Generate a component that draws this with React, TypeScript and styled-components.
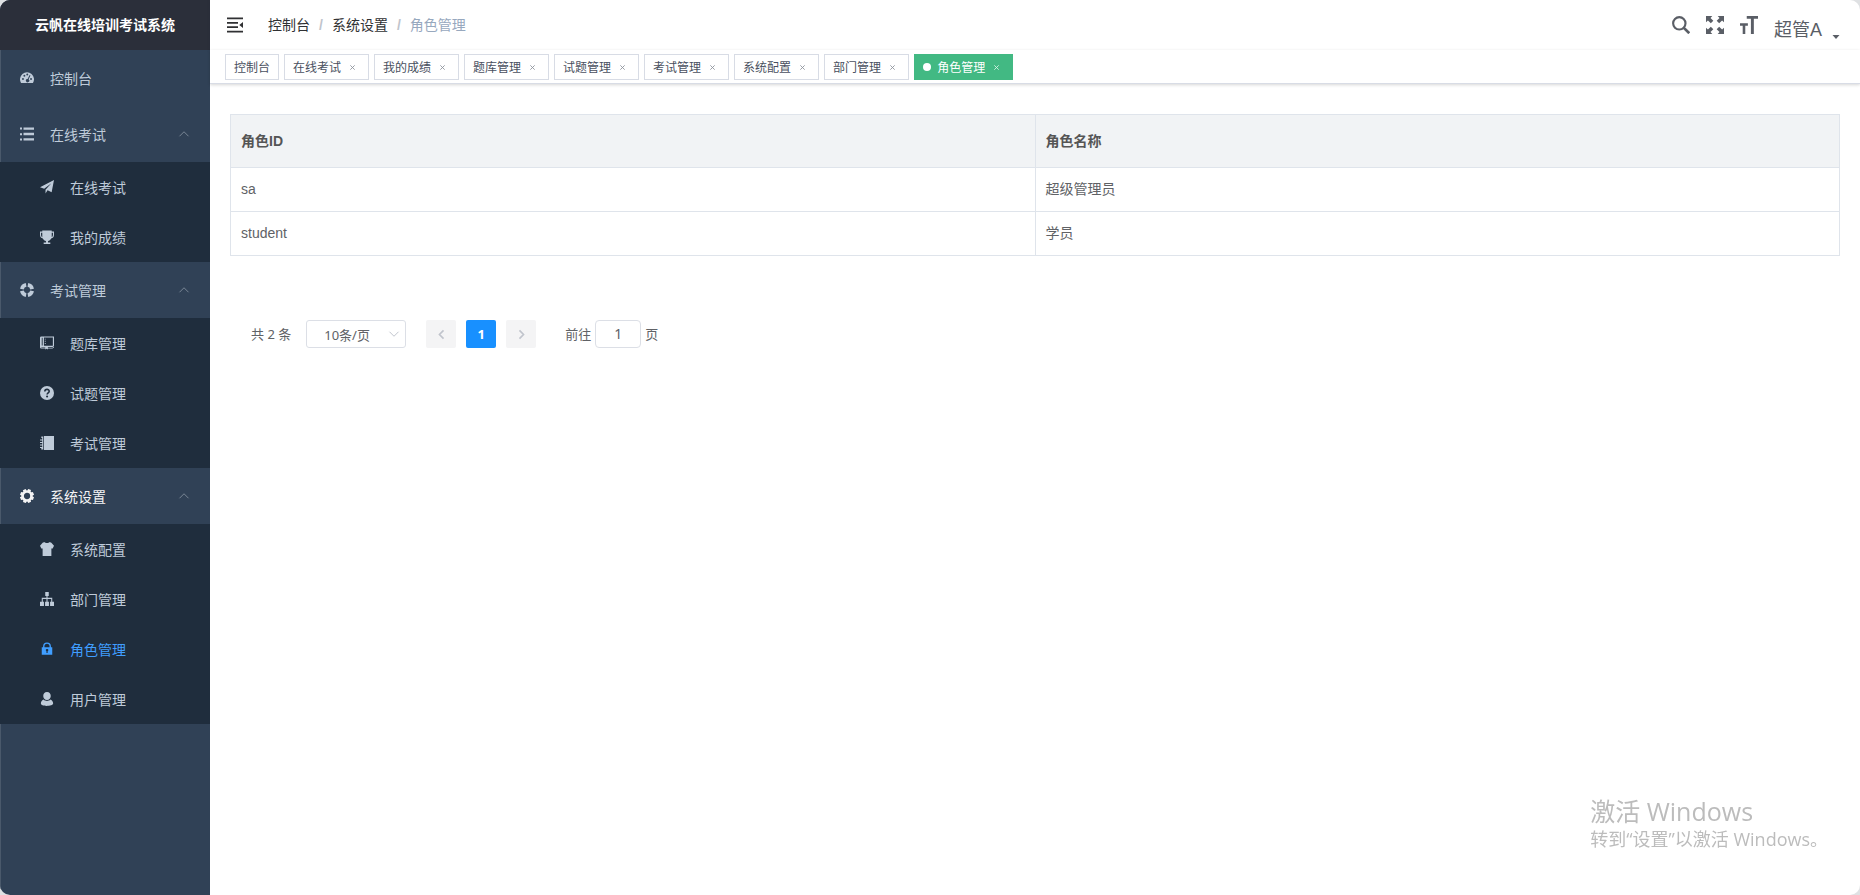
import React, { useState } from 'react';
import styled, { createGlobalStyle, css } from 'styled-components';

const GlobalStyle = createGlobalStyle`
  *, *::before, *::after { box-sizing: border-box; }
  body {
    margin: 0;
    background: #dfe1e3;
    color: #303133;
    font-family: "Liberation Sans", "Noto Sans CJK SC", sans-serif;
    font-size: 14px;
  }
  button, input, select { font: inherit; color: inherit; }
  a { color: inherit; text-decoration: none; }
`;

const Shell = styled.div`
  display: flex;
  min-height: 100vh;
  overflow: hidden;
  border-radius: 10px;
  background: #fff;
`;

const Sidebar = styled.aside`
  flex: 0 0 210px;
  background: #304156;
  box-shadow: inset 1px 0 0 #4a596b;
`;

const Brand = styled.h1`
  margin: 0;
  height: 50px;
  line-height: 50px;
  text-align: center;
  font-size: 14px;
  font-weight: 700;
  color: #fff;
  background: #2b2f3a;
`;

const MenuList = styled.ul`
  margin: 0;
  padding: 0;
  list-style: none;
`;

const itemLayout = css`
  display: flex;
  align-items: center;
  width: 100%;
  border: 0;
  background: none;
  cursor: pointer;
  text-align: left;
`;

const TopItem = styled.button<{ $current?: boolean }>`
  ${itemLayout}
  height: 56px;
  padding: 0 20px;
  gap: 16px;
  color: ${p => (p.$current ? '#f4f4f5' : '#bfcbd9')};
`;

const TopLink = styled.a`
  ${itemLayout}
  height: 56px;
  padding: 0 20px;
  gap: 16px;
  color: #bfcbd9;
`;

const SubLink = styled.a<{ $active?: boolean }>`
  ${itemLayout}
  height: 50px;
  padding: 0 20px 0 40px;
  gap: 16px;
  background: #1f2d3d;
  color: ${p => (p.$active ? '#409eff' : '#bfcbd9')};
`;

const Glyph = styled.svg<{ $size: number }>`
  flex: none;
  display: block;
  width: ${p => p.$size}px;
  height: ${p => p.$size}px;
  fill: currentColor;
`;

const Arrow = styled(Glyph)`
  margin-left: auto;
  color: #8793a1;
`;

const Main = styled.main`
  flex: 1;
  min-width: 0;
`;

const Navbar = styled.header`
  display: flex;
  align-items: center;
  justify-content: space-between;
  height: 50px;
  padding: 0 20px 0 17px;
  box-shadow: 0 1px 4px rgba(0, 21, 41, 0.08);
`;

const NavGroup = styled.div`
  display: flex;
  align-items: center;
`;

const IconButton = styled.button`
  display: flex;
  padding: 0;
  border: 0;
  background: none;
  color: inherit;
  cursor: pointer;
`;

const Crumbs = styled.nav`
  display: flex;
  gap: 9px;
  margin-left: 25px;
  line-height: 50px;
  span { color: #97a8be; }
  i { color: #c0c4cc; font-style: normal; font-weight: 700; }
`;

const Tools = styled(NavGroup)`
  gap: 16px;
  color: #5a5e66;
`;

const UserButton = styled(IconButton)`
  align-items: flex-end;
  gap: 10px;
  padding-top: 6px;
  font-size: 18px;
`;

const TagBar = styled.nav`
  display: flex;
  align-items: center;
  gap: 5px;
  height: 34px;
  padding: 0 15px;
  background: #fff;
  border-bottom: 1px solid #d8dce5;
  box-shadow: 0 1px 3px rgba(0, 0, 0, 0.16);
`;

const Tag = styled.div<{ $active?: boolean }>`
  display: flex;
  align-items: center;
  height: 26px;
  padding: 0 8px;
  border: 1px solid ${p => (p.$active ? '#42b983' : '#d8dce5')};
  background: ${p => (p.$active ? '#42b983' : '#fff')};
  color: ${p => (p.$active ? '#fff' : '#495060')};
  font-size: 12px;
`;

const Dot = styled.span`
  width: 8px;
  height: 8px;
  margin-right: 6px;
  border-radius: 50%;
  background: #fff;
`;

const TagClose = styled.button<{ $active?: boolean }>`
  display: flex;
  align-items: center;
  justify-content: center;
  width: 16px;
  height: 16px;
  margin-left: 3px;
  padding: 2px 0 0;
  border: 0;
  background: none;
  color: ${p => (p.$active ? '#d9f1e6' : '#8d929b')};
  cursor: pointer;
`;

const Content = styled.section`
  padding: 30px 20px;
`;

const Table = styled.table`
  width: 100%;
  table-layout: fixed;
  border-collapse: collapse;
  color: #606266;
  th, td {
    border: 1px solid #dfe4eb;
    padding: 0 10px;
    text-align: left;
    line-height: 23px;
  }
  th {
    height: 53px;
    background: #f1f3f5;
    color: #555;
  }
  td { height: 44px; }
`;

const Pagination = styled.div`
  display: flex;
  align-items: center;
  margin-top: 64px;
  padding-left: 21px;
  font-family: "Noto Sans", "Noto Sans CJK SC", sans-serif;
  font-size: 13px;
  line-height: 28px;
  color: #606266;
`;

const SelectBox = styled.div`
  position: relative;
  width: 100px;
  margin: 0 20px 0 15px;
`;

const PageSize = styled.select`
  display: block;
  width: 100%;
  height: 28px;
  padding: 0 32px 2px 17px;
  appearance: none;
  border: 1px solid #dcdfe6;
  border-radius: 3px;
  background: #fff;
  outline: none;
`;

const SelectArrow = styled(Glyph)`
  position: absolute;
  right: 6px;
  top: 8px;
  color: #c0c4cc;
  pointer-events: none;
`;

const Pager = styled.div`
  display: flex;
  gap: 10px;
`;

const PageButton = styled.button<{ $active?: boolean }>`
  display: flex;
  align-items: center;
  justify-content: center;
  width: 30px;
  height: 28px;
  padding: 0;
  border: 0;
  border-radius: 2px;
  background: ${p => (p.$active ? '#1890ff' : '#f4f4f5')};
  color: ${p => (p.$active ? '#fff' : '#c0c4cc')};
  font-weight: 700;
`;

const Jump = styled.label`
  display: flex;
  align-items: center;
  gap: 4px;
  margin-left: 29px;
`;

const JumpInput = styled.input`
  width: 46px;
  height: 28px;
  padding: 0 3px;
  border: 1px solid #dcdfe6;
  border-radius: 4px;
  text-align: center;
  font-size: 14px;
`;

const Watermark = styled.aside`
  position: fixed;
  right: 32px;
  bottom: 44px;
  color: #bcbcbc;
  font-family: "Open Sans", "Noto Sans CJK SC", sans-serif;
  font-weight: 400;
  pointer-events: none;
`;

const WatermarkTitle = styled.div`
  font-size: 25px;
  line-height: 32px;
`;

const WatermarkText = styled.div`
  font-size: 18px;
  line-height: 24px;
`;

const art: Record<string, React.ReactNode> = {
  dashboard: (
    <path fillRule="evenodd" d="M1.2 13.600A8 8 0 1 1 14.8 13.600H1.200ZM3.400 8a1.100 1.100 0 1 0 0 2.200 1.100 1.100 0 0 0 0-2.200Zm1.600-3.700a1.100 1.100 0 1 0 0 2.200 1.100 1.100 0 0 0 0-2.200Zm3.300-1.500a1.100 1.100 0 1 0 0 2.200 1.100 1.100 0 0 0 0-2.200Zm4.300 5.200a1.100 1.100 0 1 0 0 2.200 1.100 1.100 0 0 0 0-2.200ZM11 4.700 8.700 9.100a1.900 1.900 0 1 0 1.100.4L12 5.200Z" />
  ),
  list: <path d="M0 .5h2.300v2.300H0zM4 .5h12v2.700H4zM0 7h2.300v2.300H0zM4 6.700h12v2.700H4zM0 13h2.300v2.300H0zM4 12.800h12v2.700H4z" />,
  plane: <path d="M16 0 13.300 14 8.600 11.800 6.300 15.400V11L13 3.600 4.800 10 0 8.400Z" />,
  trophy: (
    <path fillRule="evenodd" d="M2.600.5h10.800v1.300H16v3.700c0 2.300-1.100 3.900-3.300 4.200-.8 1.600-2 2.500-3.500 2.800v1.800h2.600V16H4.200v-1.700h2.600v-1.800C5.300 12.200 4.100 11.300 3.300 9.700 1.100 9.400 0 7.800 0 5.500V1.800h2.600ZM1.200 3v2.500c0 1.400.5 2.300 1.400 2.700V3Zm12.200 0v5.200c.9-.4 1.400-1.300 1.400-2.700V3Z" />
  ),
  ring: (
    <g fill="none" stroke="currentColor" strokeWidth="4.300">
      <path d="M9 2.200a5.900 5.900 0 0 1 4.800 4.800M13.800 9a5.900 5.900 0 0 1-4.800 4.800M7 13.800a5.900 5.900 0 0 1-4.800-4.800M2.200 7a5.900 5.900 0 0 1 4.800-4.800" />
    </g>
  ),
  book: (
    <path fillRule="evenodd" d="M1.500.5H16v12H9v3l-1.500-1L6 15.500v-1.200H1.500A1.500 1.500 0 0 1 0 12.800V2A1.500 1.500 0 0 1 1.500.5ZM4.500 1.800v9.400h10.200V1.800ZM1.500 12.500v.7H6v-.7ZM2 2v8.800h1V2Zm3.500 1h1v1h-1Zm0 2.500h1v1h-1Zm0 2.500h1v1h-1ZM16 12h-1.300v2.300H9v-1h7Z" />
  ),
  question: (
    <>
      <circle cx="8" cy="8" r="8" />
      <path d="M5.500 6.300C5.500 3 10.600 3.200 10.500 6c0 1.800-2.400 1.900-2.400 3.800" fill="none" stroke="#1f2d3d" strokeWidth="1.800" />
      <circle cx="8.100" cy="12" r="1.200" fill="#1f2d3d" />
    </>
  ),
  notebook: (
    <path d="M4.500 0H16v16H4.500ZM1.500.5h2.200v15H1.500v-1.800H0v-1.200h2.500v-1.700H0V9.600h2.500V8H0V6.800h2.500V5.100H0V3.900h2.500V2.300h-1Z" />
  ),
  gear: (
    <>
      <circle cx="8" cy="8" r="5" fill="none" stroke="currentColor" strokeWidth="2.800" />
      {[22, 67, 112, 157, 202, 247, 292, 337].map(deg => (
        <path key={deg} d="M6.300 0h3.400l.4 2.800H5.900Z" transform={`rotate(${deg} 8 8)`} />
      ))}
    </>
  ),
  shirt: <path d="M5 0c1 1.600 5 1.600 6 0l2 .8 3 3.400-1.500 3.300H13V16H3V7.500H1.500L0 4.200 3 .8Z" />,
  tree: <path d="M6 0h4v4.500H8.600v2.200H14V11h2v5h-4.500v-5h1.300V7.900H8.600V11h1.600v5H5.800v-5h1.600V7.900H3.200V11h1.300v5H0v-5h2V6.700h5.400V4.500H6Z" />,
  lock: (
    <path fillRule="evenodd" d="M3.500 6V5a4.500 4.500 0 0 1 9 0v1H14v8.500H2V6Zm1.600 0h5.800V5a2.900 2.900 0 0 0-5.800 0ZM8 8a1.300 1.300 0 0 0-.6 2.500v2h1.300v-2A1.300 1.300 0 0 0 8 8Z" />
  ),
  user: <path d="M8 0c2.900 0 4.300 2 4.300 4.500S10.500 9 8 9 3.700 7 3.700 4.500 5.100 0 8 0ZM4 8.500c2.300 2.200 5.700 2.200 8 0 2 .8 3 2.700 3 4.700 0 3.300-14 3.900-14 0 0-2 1-3.900 3-4.700Z" />,
  up: <path d="m2 11 6-6 6 6" fill="none" stroke="currentColor" strokeWidth="1.100" />,
  down: <path d="m2 5 6 6 6-6" fill="none" stroke="currentColor" strokeWidth="1.300" />,
  left: <path d="m10.500 3-5 5 5 5" fill="none" stroke="currentColor" strokeWidth="2" />,
  right: <path d="m5.500 3 5 5-5 5" fill="none" stroke="currentColor" strokeWidth="2" />,
  close: <path d="m3 3 10 10M13 3 3 13" fill="none" stroke="currentColor" strokeWidth="2" />,
  fold: <path d="M0 .5h16v1.700H0zM0 5.100h11v1.700H0zM0 9.300h11V11H0zM0 13.800h16v1.700H0zM16 5v6l-3.700-3z" />,
  search: (
    <g fill="none" stroke="currentColor" strokeWidth="1.900">
      <circle cx="6.500" cy="6.500" r="5.500" />
      <path d="m10.300 10.300 5 5" strokeWidth="2.400" />
    </g>
  ),
  expand: (
    <path d="M0 0h5.600L4 1.700l2.500 2.500-2.200 2.200L1.700 3.900 0 5.600ZM16 0v5.600l-1.700-1.700-2.600 2.500-2.200-2.200L12 1.700 10.400 0ZM0 16v-5.600l1.700 1.700 2.600-2.500 2.200 2.200L4 14.300 5.600 16ZM16 16h-5.600l1.600-1.700-2.500-2.500 2.200-2.200 2.600 2.500 1.700-1.700Z" />
  ),
  size: <path d="M6 0h10v2.500h-3.700V16H9.700V2.500H6ZM0 6.500h7v2.200H4.700V16H2.400V8.700H0Z" />,
  caret: <path d="M1 4h14L8 12z" />,
};

function Icon({ name, size = 14, as: As = Glyph }: { name: string; size?: number; as?: typeof Glyph }) {
  return (
    <As $size={size} viewBox="0 0 16 16" aria-hidden="true">
      {art[name]}
    </As>
  );
}

const groups = [
  { title: '在线考试', icon: 'list', items: [['在线考试', 'plane'], ['我的成绩', 'trophy']] },
  { title: '考试管理', icon: 'ring', items: [['题库管理', 'book'], ['试题管理', 'question'], ['考试管理', 'notebook']] },
  { title: '系统设置', icon: 'gear', items: [['系统配置', 'shirt'], ['部门管理', 'tree'], ['角色管理', 'lock'], ['用户管理', 'user']] },
];

const tags = ['控制台', '在线考试', '我的成绩', '题库管理', '试题管理', '考试管理', '系统配置', '部门管理', '角色管理'];

const roles = [
  { id: 'sa', name: '超级管理员' },
  { id: 'student', name: '学员' },
];

const CURRENT_GROUP = '系统设置';
const CURRENT_PAGE = '角色管理';

function MenuGroup({ title, icon, items }: { title: string; icon: string; items: string[][] }) {
  const [open, setOpen] = useState(true);
  return (
    <li>
      <TopItem $current={title === CURRENT_GROUP} aria-expanded={open} onClick={() => setOpen(!open)}>
        <Icon name={icon} />
        {title}
        <Icon name={open ? 'up' : 'down'} size={12} as={Arrow} />
      </TopItem>
      {open && (
        <MenuList>
          {items.map(([label, glyph]) => (
            <li key={label}>
              <SubLink href="#" $active={label === CURRENT_PAGE}>
                <Icon name={glyph} />
                {label}
              </SubLink>
            </li>
          ))}
        </MenuList>
      )}
    </li>
  );
}

export default function App() {
  const [page, setPage] = useState('1');
  return (
    <>
      <GlobalStyle />
      <Shell>
        <Sidebar>
          <Brand>云帆在线培训考试系统</Brand>
          <MenuList>
            <li>
              <TopLink href="#">
                <Icon name="dashboard" />
                控制台
              </TopLink>
            </li>
            {groups.map(g => (
              <MenuGroup key={g.title} {...g} />
            ))}
          </MenuList>
        </Sidebar>
        <Main>
          <Navbar>
            <NavGroup>
              <IconButton aria-label="收起菜单">
                <Icon name="fold" size={16} />
              </IconButton>
              <Crumbs>
                <a href="#">控制台</a>
                <i>/</i>
                <a href="#">系统设置</a>
                <i>/</i>
                <span>角色管理</span>
              </Crumbs>
            </NavGroup>
            <Tools>
              <IconButton aria-label="搜索">
                <Icon name="search" size={18} />
              </IconButton>
              <IconButton aria-label="全屏">
                <Icon name="expand" size={18} />
              </IconButton>
              <IconButton aria-label="字号">
                <Icon name="size" size={18} />
              </IconButton>
              <UserButton>
                超管A
                <Icon name="caret" size={8} />
              </UserButton>
            </Tools>
          </Navbar>
          <TagBar>
            {tags.map((t, i) => {
              const active = t === CURRENT_PAGE;
              return (
                <Tag key={t} $active={active}>
                  {active && <Dot />}
                  <a href="#">{t}</a>
                  {i > 0 && (
                    <TagClose $active={active} aria-label={`关闭${t}`}>
                      <Icon name="close" size={7} />
                    </TagClose>
                  )}
                </Tag>
              );
            })}
          </TagBar>
          <Content>
            <Table>
              <thead>
                <tr>
                  <th>角色ID</th>
                  <th>角色名称</th>
                </tr>
              </thead>
              <tbody>
                {roles.map(r => (
                  <tr key={r.id}>
                    <td>{r.id}</td>
                    <td>{r.name}</td>
                  </tr>
                ))}
              </tbody>
            </Table>
            <Pagination>
              <span>共 2 条</span>
              <SelectBox>
                <PageSize aria-label="每页条数" defaultValue="10">
                  <option value="10">10条/页</option>
                  <option value="20">20条/页</option>
                </PageSize>
                <Icon name="down" size={12} as={SelectArrow} />
              </SelectBox>
              <Pager>
                <PageButton aria-label="上一页" disabled>
                  <Icon name="left" size={13} />
                </PageButton>
                <PageButton $active>1</PageButton>
                <PageButton aria-label="下一页" disabled>
                  <Icon name="right" size={13} />
                </PageButton>
              </Pager>
              <Jump>
                前往
                <JumpInput value={page} onChange={e => setPage(e.target.value)} />
                页
              </Jump>
            </Pagination>
          </Content>
        </Main>
      </Shell>
      <Watermark>
        <WatermarkTitle>激活 Windows</WatermarkTitle>
        <WatermarkText>转到“设置”以激活 Windows。</WatermarkText>
      </Watermark>
    </>
  );
}
